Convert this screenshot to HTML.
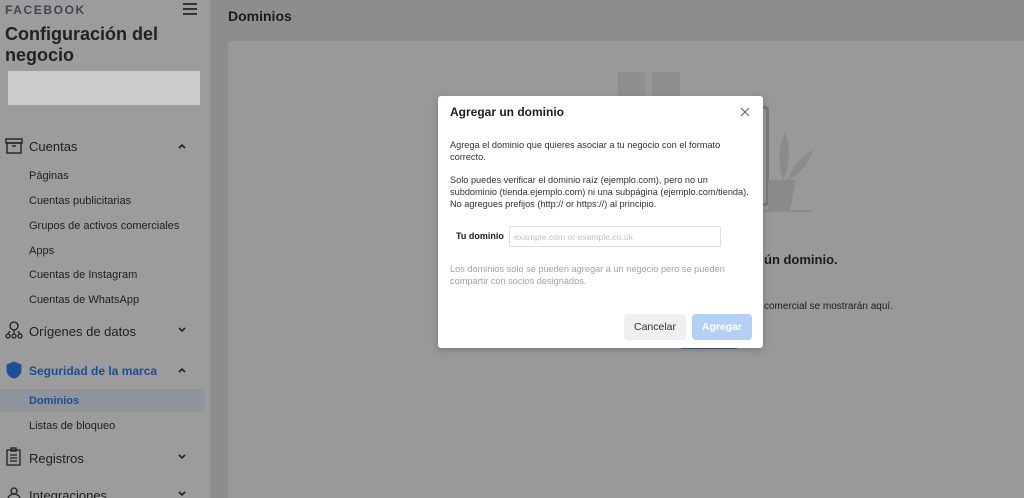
<!DOCTYPE html>
<html><head><meta charset="utf-8"><style>
*{margin:0;padding:0;box-sizing:border-box}
html,body{overflow:hidden}
body{width:1024px;height:498px;background:#8d8d8d;font-family:"Liberation Sans",Arial,sans-serif;position:relative;color:#1c1c1c}
.sb{position:absolute;left:0;top:0;width:211px;height:498px;background:#9c9c9c;border-right:1px solid #939393}
.t{position:absolute;font-size:11px;color:#1e1e1e}
.m{position:absolute;font-size:13px;color:#1e1e1e}
.chev{position:absolute;left:178px;width:8px;height:8px}
</style></head><body>
<div class="sb">
<div style="position:absolute;left:5px;top:3px;font-size:12px;letter-spacing:1.6px;color:#3f4550;font-weight:bold">FACEBOOK</div>
<div style="position:absolute;left:183px;top:3px;width:14px;height:2px;background:#333;box-shadow:0 5px 0 #333,0 10px 0 #333"></div>
<div style="position:absolute;left:5px;top:24px;font-size:18px;font-weight:bold;line-height:21px;color:#222">Configuración del<br>negocio</div>
<div style="position:absolute;left:8px;top:71px;width:192px;height:34px;background:#cbcbcb"></div>
<svg style="position:absolute;left:5px;top:138px" width="18" height="16"><rect x="1" y="1" width="16" height="4" fill="none" stroke="#222" stroke-width="1.4"/><rect x="2" y="5" width="14" height="10" fill="none" stroke="#222" stroke-width="1.4"/><line x1="7" y1="8" x2="11" y2="8" stroke="#222" stroke-width="1.4"/></svg>
<div class="m" style="left:29px;top:139px">Cuentas</div>
<div class="t" style="left:29px;top:170px">Páginas</div>
<div class="t" style="left:29px;top:195px">Cuentas publicitarias</div>
<div class="t" style="left:29px;top:220px">Grupos de activos comerciales</div>
<div class="t" style="left:29px;top:245px">Apps</div>
<div class="t" style="left:29px;top:269px">Cuentas de Instagram</div>
<div class="t" style="left:29px;top:294px">Cuentas de WhatsApp</div>
<svg style="position:absolute;left:5px;top:321px" width="18" height="18" fill="none" stroke="#222" stroke-width="1.3"><circle cx="9" cy="5" r="4"/><circle cx="3" cy="15" r="2"/><circle cx="9" cy="15" r="2"/><circle cx="15" cy="15" r="2"/><path d="M9 9v4M5 10l-2 3M13 10l2 3"/></svg>
<div class="m" style="left:29px;top:324px">Orígenes de datos</div>
<svg style="position:absolute;left:5px;top:361px" width="18" height="18"><path d="M9 1L16 4v5c0 4-3 7-7 8C5 16 2 13 2 9V4z" fill="#1d4f9c" stroke="#1d4f9c"/></svg>
<div class="m" style="left:29px;top:364px;color:#1c4c96;font-weight:bold;font-size:12px">Seguridad de la marca</div>
<div style="position:absolute;left:0;top:389px;width:205px;height:23px;background:#8f949b;border-radius:0 6px 6px 0"></div>
<div class="t" style="left:29px;top:395px;color:#1c4c96;font-weight:bold">Dominios</div>
<div class="t" style="left:29px;top:420px">Listas de bloqueo</div>
<svg style="position:absolute;left:6px;top:447px" width="16" height="20" fill="none" stroke="#222" stroke-width="1.3"><rect x="1" y="3" width="13" height="15"/><rect x="5" y="1" width="5" height="3"/><path d="M4 8h7M4 11h7M4 14h7"/></svg>
<div class="m" style="left:29px;top:451px">Registros</div>
<svg style="position:absolute;left:7px;top:487px" width="14" height="12" fill="none" stroke="#222" stroke-width="1.3"><circle cx="7" cy="4" r="3"/><path d="M1 12c0-3 3-5 6-5s6 2 6 5"/></svg>
<div class="m" style="left:29px;top:488px">Integraciones</div>
<svg class="chev" style="top:142px" viewBox="0 0 8 8"><path d="M1 6l3-3 3 3" fill="none" stroke="#222" stroke-width="1.6"/></svg>
<svg class="chev" style="top:326px" viewBox="0 0 8 8"><path d="M1 2l3 3 3-3" fill="none" stroke="#222" stroke-width="1.6"/></svg>
<svg class="chev" style="top:366px" viewBox="0 0 8 8"><path d="M1 6l3-3 3 3" fill="none" stroke="#222" stroke-width="1.6"/></svg>
<svg class="chev" style="top:453px" viewBox="0 0 8 8"><path d="M1 2l3 3 3-3" fill="none" stroke="#222" stroke-width="1.6"/></svg>
<svg class="chev" style="top:490px" viewBox="0 0 8 8"><path d="M1 2l3 3 3-3" fill="none" stroke="#222" stroke-width="1.6"/></svg>
</div>
<div style="position:absolute;left:228px;top:8px;font-size:14px;font-weight:bold;color:#1c1c1c">Dominios</div>
<div style="position:absolute;left:228px;top:41px;width:796px;height:457px;background:#999;border-radius:4px 0 0 0"></div>
<div style="position:absolute;left:618px;top:72px;width:27px;height:28px;background:#8f8f8f"></div>
<div style="position:absolute;left:652px;top:72px;width:28px;height:28px;background:#8f8f8f"></div>
<div style="position:absolute;left:763px;top:106px;width:6px;height:100px;border:3px solid #7c7a78;border-left:none;border-radius:0 4px 4px 0"></div>
<svg style="position:absolute;left:763px;top:125px" width="70" height="90"><path d="M5 85V55h28l-6 30z" fill="#8a8a8a"/><path d="M20 55C15 40 15 20 22 8c6 15 5 35-2 47zM25 55c5-15 15-25 25-30-5 15-15 25-25 30z" fill="#8b8b8b"/><line x1="0" y1="86" x2="50" y2="86" stroke="#7e7e7e"/></svg>
<div style="position:absolute;left:764px;top:252px;font-size:13px;font-weight:bold;color:#1c1c1c">ún dominio.</div>
<div style="position:absolute;left:764px;top:301px;font-size:10px;color:#1c1c1c">comercial se mostrarán aquí.</div>
<div style="position:absolute;left:681px;top:346px;width:56px;height:3px;background:#445a80"></div>
<div style="position:absolute;left:438px;top:96px;width:325px;height:252px;background:#fff;border-radius:3px;box-shadow:0 2px 8px rgba(0,0,0,.2)">
<div style="position:absolute;left:12px;top:9px;font-size:12px;font-weight:bold;color:#1c1e21">Agregar un dominio</div>
<svg style="position:absolute;left:302px;top:11px" width="10" height="10"><path d="M1 1l8 8M9 1l-8 8" stroke="#606770" stroke-width="1.2"/></svg>
<div style="position:absolute;left:12px;top:44px;width:300px;font-size:9.2px;line-height:11.8px;color:#333">Agrega el dominio que quieres asociar a tu negocio con el formato correcto.<br><br>Solo puedes verificar el dominio raíz (ejemplo.com), pero no un subdominio (tienda.ejemplo.com) ni una subpágina (ejemplo.com/tienda). No agregues prefijos (http:// or https://) al principio.</div>
<div style="position:absolute;left:18px;top:135px;font-size:9px;font-weight:bold;color:#1c1e21">Tu dominio</div>
<div style="position:absolute;left:71px;top:130px;width:212px;height:21px;border:1px solid #dddfe2;border-radius:2px;font-size:8.6px;color:#bec3c9;padding:5px 4px">example.com or example.co.uk</div>
<div style="position:absolute;left:12px;top:168px;width:300px;font-size:9.2px;line-height:11.8px;color:#a0a4a9">Los dominios solo se pueden agregar a un negocio pero se pueden compartir con socios designados.</div>
<div style="position:absolute;left:186px;top:218px;width:62px;height:26px;background:#eeeff1;border-radius:4px;font-size:10.5px;color:#333;text-align:center;line-height:26px">Cancelar</div>
<div style="position:absolute;left:254px;top:218px;width:60px;height:26px;background:#b5d0f5;border-radius:4px;font-size:10.5px;color:#fff;font-weight:bold;text-align:center;line-height:26px">Agregar</div>
</div>
</body></html>
